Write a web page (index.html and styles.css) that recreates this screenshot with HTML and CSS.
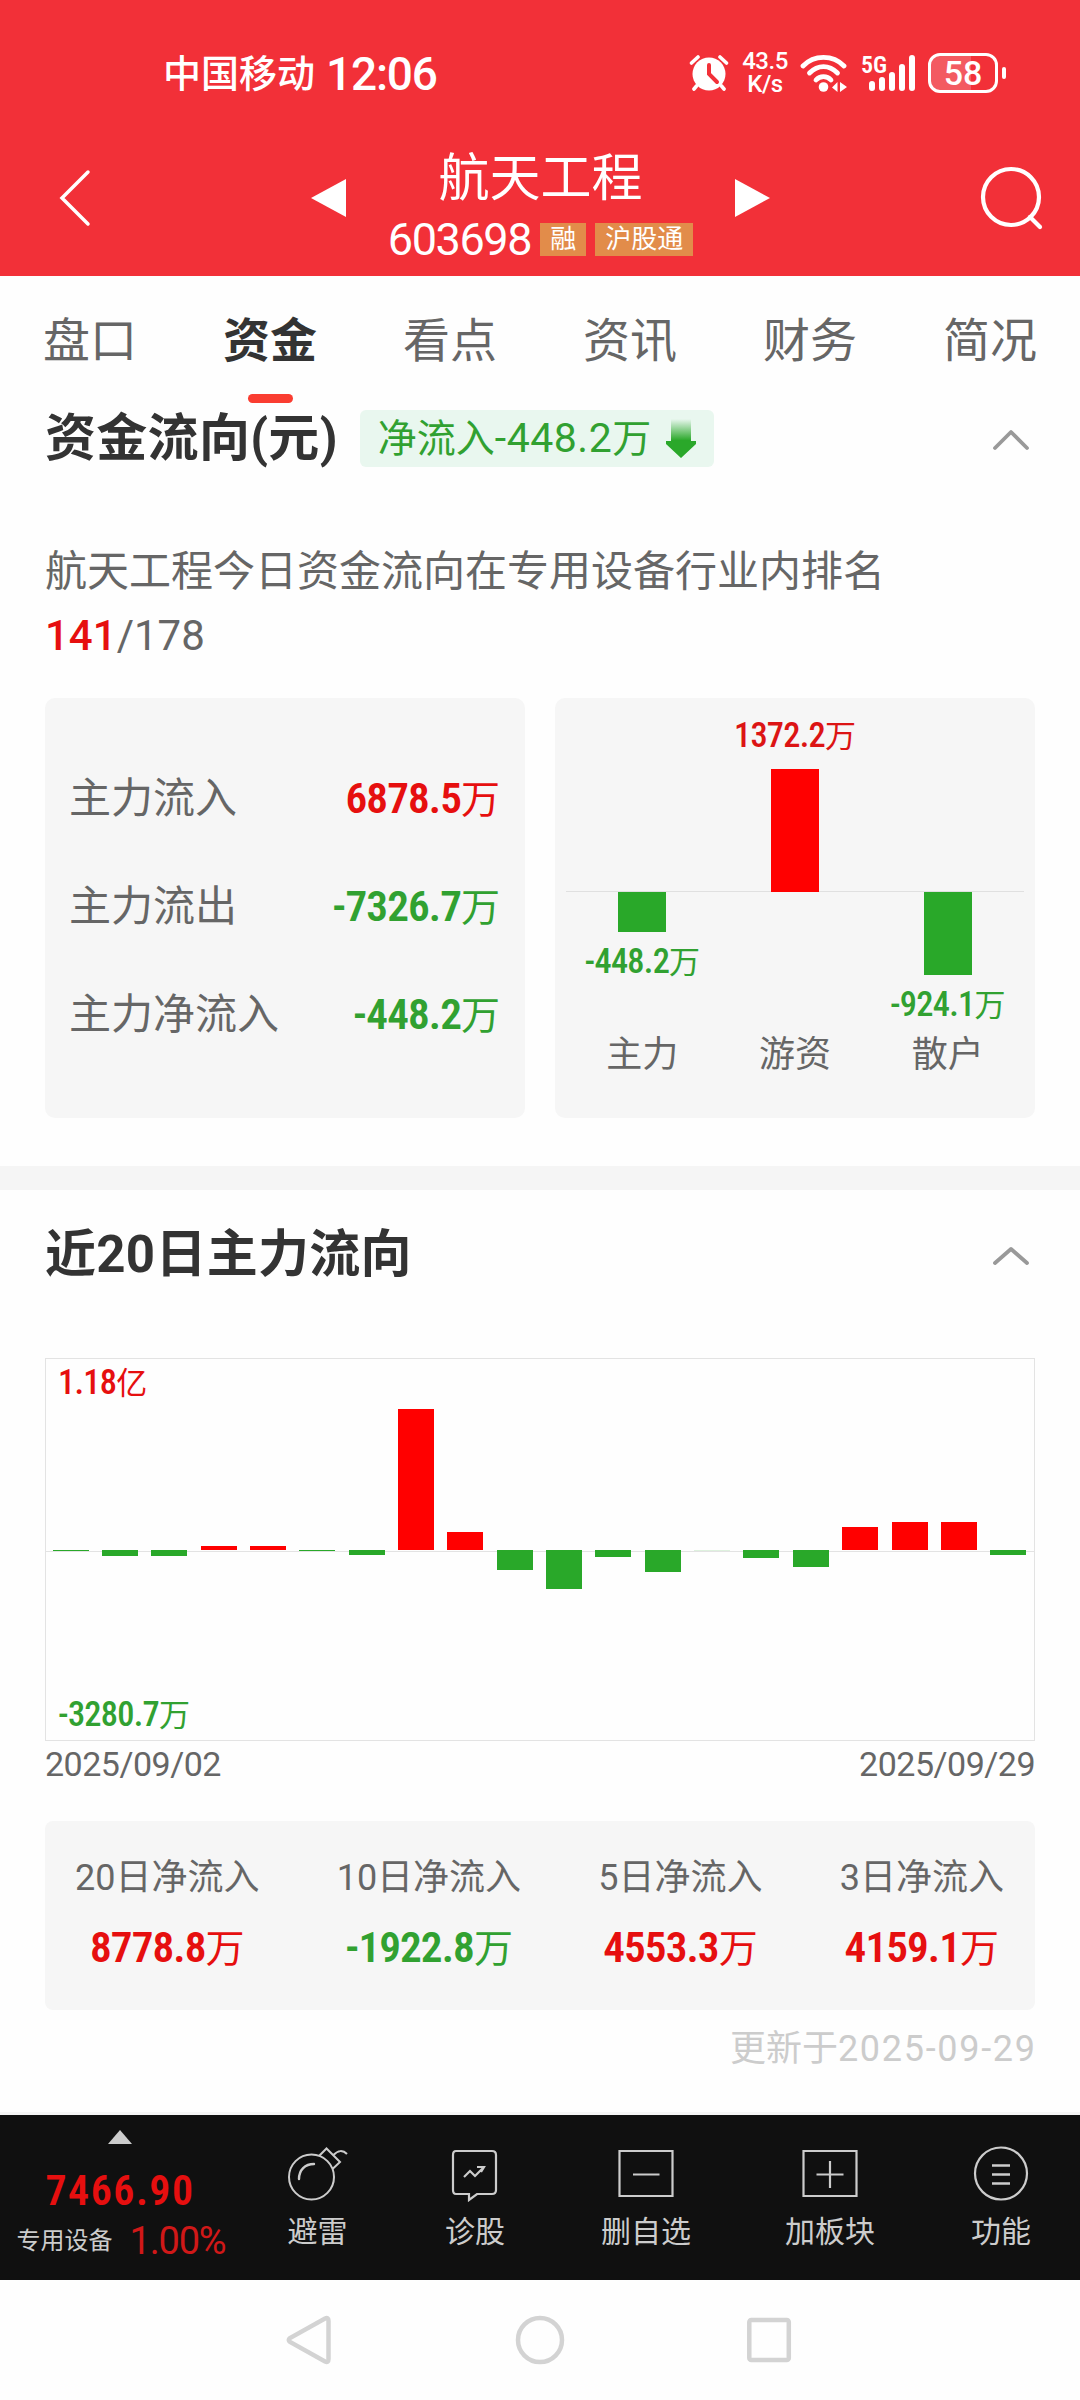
FILE: index.html
```html
<!DOCTYPE html>
<html lang="zh-CN">

<head>
  <meta charset="UTF-8">
  <meta name="viewport" content="width=device-width, initial-scale=1.0">
  <title>航天工程 603698</title>
  <link rel="stylesheet" href="styles.css">
</head>

<body>
  <header class="header">
    <div class="status-bar">
      <div class="carrier">中国移动 <span class="time">12:06</span></div>
      <div class="status-icons">
        <svg class="alarm" width="40" height="38" viewBox="0 0 40 38">
          <circle cx="20" cy="20" r="16.5" fill="#fff" />
          <path d="M2.500 9L9 3M37.500 9L31 3M7.500 32L5 35M32.500 32L35 35" stroke="#fff" stroke-width="3.600" stroke-linecap="round" />
          <path d="M20 11V20L28 28" stroke="#f23038" stroke-width="4" fill="none" stroke-linecap="round" />
        </svg>
        <div class="speed"><span>43.5</span><span>K/s</span></div>
        <svg class="wifi" width="48" height="38" viewBox="0 0 48 38">
          <g fill="none" stroke="#fff" stroke-width="4.800" stroke-linecap="round">
            <path d="M3 12C14 0.500 33 0.500 44 12" />
            <path d="M9.500 19C18 10.500 29 10.500 37.500 19" />
            <path d="M16 26C20 21.500 27 21.500 31 26" />
          </g>
          <circle cx="23.500" cy="33" r="4.800" fill="#fff" />
          <path d="M37.500 28V38L32 33.500ZM40 28L47 33L40 38Z" fill="#fff" />
        </svg>
        <div class="signal">
          <span class="net">5G</span>
          <svg width="56" height="38" viewBox="0 0 56 38">
            <g stroke="#fff" stroke-width="6" stroke-linecap="round">
              <path d="M12 30V34M22 26V34M32 21V34M42 13V34M52 4V34" />
            </g>
          </svg>
        </div>
        <div class="battery"><span>58</span></div>
      </div>
    </div>
    <div class="nav-bar">
      <svg class="back" width="32" height="58" viewBox="0 0 32 58">
        <path d="M29 3L3 29L29 55" fill="none" stroke="#fff" stroke-width="3.500" stroke-linecap="round" />
      </svg>
      <svg class="prev" width="35" height="38" viewBox="0 0 35 38"><path d="M35 0V38L0 19Z" fill="#fff" /></svg>
      <div class="stock">
        <div class="stock-name">航天工程</div>
        <div class="stock-code"><span class="code">603698</span><span class="tag">融</span><span class="tag">沪股通</span></div>
      </div>
      <svg class="next" width="35" height="38" viewBox="0 0 35 38"><path d="M0 0V38L35 19Z" fill="#fff" /></svg>
      <svg class="search" width="66" height="66" viewBox="0 0 66 66">
        <g fill="none" stroke="#fff" stroke-width="4.200" stroke-linecap="round">
          <circle cx="32" cy="32" r="28" />
          <path d="M51 52L61 62" />
        </g>
      </svg>
    </div>
  </header>

  <nav class="tabs">
    <div class="tab">盘口</div>
    <div class="tab active">资金</div>
    <div class="tab">看点</div>
    <div class="tab">资讯</div>
    <div class="tab">财务</div>
    <div class="tab">简况</div>
  </nav>

  <section class="flow">
    <div class="section-head">
      <h2>资金流向(元)</h2>
      <div class="pill">
        <span>净流入<span class="num">-448.2</span>万</span>
        <svg width="30" height="40" viewBox="0 0 30 40">
          <defs>
            <linearGradient id="fade" x1="0" y1="0" x2="0" y2="1">
              <stop offset="0" stop-color="#2aa82a" stop-opacity="0" />
              <stop offset="0.550" stop-color="#2aa82a" />
            </linearGradient>
          </defs>
          <path d="M5 0H25V22H30V25L15 39L0 25V22H5Z" fill="url(#fade)" />
        </svg>
      </div>
      <svg class="arrow" width="38" height="22" viewBox="0 0 38 22">
        <path d="M3 19L19 3L35 19" fill="none" stroke="#999" stroke-width="3.800" stroke-linecap="round" stroke-linejoin="round" />
      </svg>
    </div>
    <p class="rank">航天工程今日资金流向在专用设备行业内排名<br><span class="rank-num"><b>141</b>/178</span></p>
    <div class="cards">
      <div class="card summary">
        <div class="row"><span>主力流入</span><span class="value red"><span class="din">6878.5</span>万</span></div>
        <div class="row"><span>主力流出</span><span class="value green"><span class="din">-7326.7</span>万</span></div>
        <div class="row"><span>主力净流入</span><span class="value green"><span class="din">-448.2</span>万</span></div>
      </div>
      <div class="card chart">
        <div class="columns">
          <div class="column down">
            <div class="bar" style="height: 40px"></div>
            <div class="bar-label"><span class="din">-448.2</span>万</div>
          </div>
          <div class="column up">
            <div class="bar-label"><span class="din">1372.2</span>万</div>
            <div class="bar" style="height: 123px"></div>
          </div>
          <div class="column down">
            <div class="bar" style="height: 83px"></div>
            <div class="bar-label"><span class="din">-924.1</span>万</div>
          </div>
        </div>
        <div class="names"><span>主力</span><span>游资</span><span>散户</span></div>
      </div>
    </div>
  </section>

  <section class="history">
    <div class="section-head">
      <h2>近20日主力流向</h2>
      <svg class="arrow" width="38" height="20" viewBox="0 0 38 20">
        <path d="M3 17L19 3L35 17" fill="none" stroke="#999" stroke-width="3.800" stroke-linecap="round" stroke-linejoin="round" />
      </svg>
    </div>
    <div class="history-chart">
      <div class="limit red"><span class="din">1.18</span>亿</div>
      <div class="days">
        <i class="down" style="height: 1px"></i>
        <i class="down" style="height: 6px"></i>
        <i class="down" style="height: 6px"></i>
        <i class="up" style="height: 4px"></i>
        <i class="up" style="height: 4px"></i>
        <i class="down" style="height: 1px"></i>
        <i class="down" style="height: 5px"></i>
        <i class="up" style="height: 141px"></i>
        <i class="up" style="height: 18px"></i>
        <i class="down" style="height: 20px"></i>
        <i class="down" style="height: 39px"></i>
        <i class="down" style="height: 7px"></i>
        <i class="down" style="height: 22px"></i>
        <i class="down flat" style="height: 1px"></i>
        <i class="down" style="height: 8px"></i>
        <i class="down" style="height: 17px"></i>
        <i class="up" style="height: 23px"></i>
        <i class="up" style="height: 28px"></i>
        <i class="up" style="height: 28px"></i>
        <i class="down" style="height: 5px"></i>
      </div>
      <div class="limit green"><span class="din">-3280.7</span>万</div>
    </div>
    <div class="dates"><span>2025/09/02</span><span>2025/09/29</span></div>
    <div class="stats">
      <div class="stat"><span>20日净流入</span><span class="value red"><span class="din">8778.8</span>万</span></div>
      <div class="stat"><span>10日净流入</span><span class="value green"><span class="din">-1922.8</span>万</span></div>
      <div class="stat"><span>5日净流入</span><span class="value red"><span class="din">4553.3</span>万</span></div>
      <div class="stat"><span>3日净流入</span><span class="value red"><span class="din">4159.1</span>万</span></div>
    </div>
    <div class="updated">更新于<span>2025-09-29</span></div>
  </section>

  <footer class="toolbar">
    <div class="index">
      <svg width="24" height="14" viewBox="0 0 24 14"><path d="M12 0L24 14H0Z" fill="#ccc" /></svg>
      <div class="index-value">7466.90</div>
      <div class="index-name">专用设备<span>1.00%</span></div>
    </div>
    <div class="tool tool-bomb">
      <svg width="60" height="56" viewBox="0 0 60 56">
        <g fill="none" stroke="#ccc" stroke-width="2">
          <circle cx="23.500" cy="31" r="22.500" />
          <path d="M11 33C11 24 17 18 26 18" stroke-width="2.400" stroke-linecap="round" />
          <path d="M31 10L38.500 2.500L52 16L44.500 23M45.500 9C50 4 55 4 59 8" />
        </g>
      </svg>
      <span>避雷</span>
    </div>
    <div class="tool tool-diagnose">
      <svg width="60" height="56" viewBox="0 0 60 56">
        <path d="M11 5H47Q51 5 51 9V44Q51 48 47 48H32L24 54V48H11Q8 48 8 44V9Q8 5 11 5Z" fill="none" stroke="#ccc" stroke-width="2.200" />
        <path d="M19 31L25 25L30 30L38 22M32 21H39L36 26" fill="none" stroke="#ccc" stroke-width="2.200" />
      </svg>
      <span>诊股</span>
    </div>
    <div class="tool tool-remove">
      <svg width="60" height="56" viewBox="0 0 60 56">
        <path d="M3.500 5H56.500V50H3.500ZM17 28.500H43.500" fill="none" stroke="#ccc" stroke-width="2.200" />
      </svg>
      <span>删自选</span>
    </div>
    <div class="tool tool-add">
      <svg width="60" height="56" viewBox="0 0 60 56">
        <path d="M3.500 5H56.500V50H3.500ZM16.500 28.500H43.500M30 15V42" fill="none" stroke="#ccc" stroke-width="2.200" />
      </svg>
      <span>加板块</span>
    </div>
    <div class="tool tool-more">
      <svg width="60" height="56" viewBox="0 0 60 56">
        <circle cx="30" cy="27.500" r="26" fill="none" stroke="#ccc" stroke-width="2.200" />
        <path d="M21 19.500H39M21 28.500H39M21 37.500H39" stroke="#ccc" stroke-width="2.400" />
      </svg>
      <span>功能</span>
    </div>
  </footer>

  <div class="system-nav">
    <svg width="50" height="50" viewBox="0 0 50 50"><path d="M40 3.500Q43.500 2 43.500 6V44Q43.500 48 40 46.500L5 27Q2.500 25 5 23Z" fill="none" stroke="#d3d3d3" stroke-width="4.500" /></svg>
    <svg width="50" height="50" viewBox="0 0 50 50"><circle cx="25" cy="25" r="22" fill="none" stroke="#d3d3d3" stroke-width="4.500" /></svg>
    <svg width="50" height="50" viewBox="0 0 50 50"><rect x="4.300" y="5" width="39.500" height="40" rx="2" fill="none" stroke="#d3d3d3" stroke-width="4.500" /></svg>
  </div>
</body>

</html>
```
FILE: styles.css
```css
* {
  box-sizing: border-box;
}

body {
  margin: 0;
  width: 1080px;
  background-color: #fefefe;
  color: #666;
  font-family: Roboto, "Noto Sans CJK SC", sans-serif;
  font-size: 42px;
  line-height: 1.2;
}

svg {
  display: block;
  flex: none;
}

h2,
p {
  margin: 0;
}

.red {
  color: #e60f0f;
}

.green {
  color: #31a131;
}

/* 顶部 */
.header {
  height: 276px;
  background-color: #f23038;
  color: white;
}

.status-bar {
  display: flex;
  justify-content: space-between;
  align-items: center;
  height: 146px;
  padding: 0 82px 0 163px;
}

.carrier {
  display: flex;
  align-items: center;
  gap: 11px;
  padding-top: 3px;
  font-size: 38px;
  font-weight: 500;
}

.time {
  font-size: 46px;
  letter-spacing: -1.200px;
}

.status-icons {
  display: flex;
  align-items: center;
}

.speed {
  display: flex;
  flex-direction: column;
  align-items: center;
  width: 48px;
  margin-left: 12px;
  font-size: 24px;
  font-weight: 500;
  line-height: 23px;
  letter-spacing: -0.500px;
}

.wifi {
  margin-left: 11px;
}

.signal {
  position: relative;
  margin-left: 12px;
}

.net {
  position: absolute;
  top: -1px;
  left: 1px;
  font-size: 24px;
  font-weight: 600;
  font-stretch: 75%;
  line-height: 24px;
}

.battery {
  position: relative;
  display: flex;
  justify-content: center;
  align-items: center;
  width: 70px;
  height: 40px;
  margin-left: 12px;
  border: 3px solid white;
  border-radius: 12px;
  background: linear-gradient(to right, #f35a61 62%, transparent 62%);
  font-size: 34px;
  font-weight: 500;
  line-height: 34px;
}

.battery::after {
  content: "";
  position: absolute;
  right: -11px;
  width: 4px;
  height: 12px;
  border-radius: 2px;
  background-color: white;
}

.nav-bar {
  display: flex;
  align-items: center;
  height: 130px;
  padding: 0 35px 0 59px;
}

.back {
  margin-top: -26px;
}

.prev {
  margin: -27px 0 0 220px;
}

.stock {
  flex: 1;
  height: 130px;
}

.stock-name {
  height: 62px;
  font-size: 51px;
  line-height: 65px;
  text-align: center;
}

.stock-code {
  display: flex;
  justify-content: center;
  align-items: center;
  gap: 9px;
  height: 62px;
}

.code {
  padding-top: 2px;
  font-size: 45px;
  letter-spacing: -1.400px;
}

.tag {
  height: 33px;
  padding: 0 10px;
  background-color: #e28c4a;
  font-size: 26px;
  line-height: 32px;
}

.next {
  margin: -27px 209px 0 0;
}

.search {
  margin-top: -26px;
}

/* 标签 */
.tabs {
  display: flex;
  height: 127px;
}

.tab {
  position: relative;
  width: 180px;
  font-size: 47px;
  line-height: 130px;
  text-align: center;
}

.tab.active {
  color: #333;
  font-weight: bold;
}

.tab.active::after {
  content: "";
  position: absolute;
  left: 68px;
  bottom: 0;
  width: 45px;
  height: 9px;
  border-radius: 5px;
  background-color: #fa3d31;
}

/* 资金流向 */
.flow {
  height: 787px;
  padding: 7px 45px 0;
  border-bottom: 24px solid #f5f5f5;
}

.section-head {
  display: flex;
  align-items: center;
  height: 57px;
}

.section-head h2 {
  color: #333;
  font-size: 51px;
  line-height: 58px;
  letter-spacing: 0.300px;
}

.section-head .arrow {
  margin: 3px 5px 0 auto;
}

.pill {
  display: flex;
  align-items: center;
  gap: 15px;
  height: 57px;
  margin-left: 22px;
  padding: 0 18px;
  border-radius: 6px;
  background-color: #e9f7ef;
  color: #31a131;
  font-size: 39px;
  line-height: 51px;
}

.num {
  font-size: 41px;
  letter-spacing: 0.500px;
}

.rank {
  height: 231px;
  padding-top: 73px;
  line-height: 64px;
}

.rank b {
  color: #e60f0f;
  font-weight: 500;
}

.cards {
  display: flex;
  gap: 30px;
}

.card {
  width: 480px;
  height: 420px;
  border-radius: 10px;
  background-color: #f6f6f6;
}

.summary {
  padding: 47px 25px 0 24px;
}

.row {
  display: flex;
  justify-content: space-between;
  align-items: center;
  height: 108px;
}

.value {
  font-size: 39px;
}

.din {
  font-size: 1.110em;
  font-weight: 600;
  font-stretch: 75%;
  letter-spacing: -0.022em;
}

.chart {
  padding: 0 11px;
}

.columns {
  display: flex;
  height: 330px;
  background: linear-gradient(#e0e0e0, #e0e0e0) 0 193px / 100% 1px no-repeat;
}

.column {
  display: flex;
  flex-direction: column;
  align-items: center;
  flex: 1;
}

.column.up {
  justify-content: flex-end;
  height: 194px;
  color: #dc1414;
}

.column.down {
  padding-top: 194px;
  color: #31a131;
}

.bar {
  flex: none;
  width: 48px;
}

.up .bar {
  background-color: #ff0000;
}

.down .bar {
  background-color: #29a829;
}

.bar-label {
  flex: none;
  height: 58px;
  font-size: 31px;
  line-height: 58px;
  white-space: nowrap;
}

.bar-label .din,
.limit .din {
  font-weight: 500;
}

.up .bar-label {
  height: 63px;
}

.names {
  display: flex;
  font-size: 36px;
  line-height: 54px;
}

.names span {
  flex: 1;
  text-align: center;
}

/* 近20日主力流向 */
.history {
  height: 925px;
  padding: 36px 45px 0;
  border-bottom: 3px solid #f5f5f5;
}

.history-chart {
  display: flex;
  flex-direction: column;
  justify-content: space-between;
  height: 383px;
  margin-top: 75px;
  border: 1px solid #e3e3e3;
}

.limit {
  height: 46px;
  padding-left: 12px;
  font-size: 31px;
  line-height: 46px;
}

.limit.green {
  height: 48px;
  margin-top: -3px;
  line-height: 44px;
}

.days {
  display: flex;
  justify-content: space-around;
  align-items: flex-start;
  height: 2px;
  margin-top: 1px;
  padding-right: 1px;
  border-bottom: 1px solid #e3e3e3;
}

.days i {
  flex: none;
  width: 36px;
}

.days .up {
  background-color: #ff0000;
  transform: translateY(-100%);
}

.days .down {
  background-color: #29a829;
}

.days .flat {
  opacity: 0.150;
}

.dates {
  display: flex;
  justify-content: space-between;
  height: 80px;
  font-size: 34px;
  line-height: 46px;
  letter-spacing: -0.500px;
}

.stats {
  display: flex;
  justify-content: space-between;
  height: 189px;
  padding: 31px 31px 0 30px;
  border-radius: 8px;
  background-color: #f6f6f6;
}

.stat {
  display: flex;
  flex-direction: column;
  align-items: center;
  font-size: 36px;
  line-height: 53px;
}

.stat .value {
  line-height: 85px;
}

.updated {
  color: #ccc;
  font-size: 36px;
  line-height: 78px;
  text-align: right;
}

.updated span {
  margin-right: -1.700px;
  letter-spacing: 1.700px;
}

/* 底部工具栏 */
.toolbar {
  display: flex;
  height: 165px;
  background-color: #101010;
  color: #ccc;
}

.index {
  display: flex;
  flex-direction: column;
  align-items: center;
  width: 240px;
  padding-top: 15px;
}

.index-value {
  height: 72px;
  padding-top: 22px;
  color: #e60f0f;
  font-weight: 600;
  font-stretch: 75%;
  letter-spacing: 1.500px;
}

.index-name {
  display: flex;
  align-items: center;
  gap: 17px;
  height: 51px;
  padding-left: 2px;
  font-size: 24px;
}

.index-name span {
  color: #d01818;
  font-size: 38px;
  letter-spacing: -1.200px;
}

.tool {
  display: flex;
  flex-direction: column;
  align-items: center;
  padding-top: 31px;
  font-size: 30px;
  line-height: 60px;
}

.tool-bomb {
  width: 155px;
}

.tool-diagnose {
  width: 160px;
}

.tool-remove {
  width: 182px;
}

.tool-add {
  width: 186px;
}

.tool-more {
  width: 156px;
}

/* 系统导航 */
.system-nav {
  display: flex;
  gap: 180px;
  height: 120px;
  padding: 35px 0 0 285px;
}
```
